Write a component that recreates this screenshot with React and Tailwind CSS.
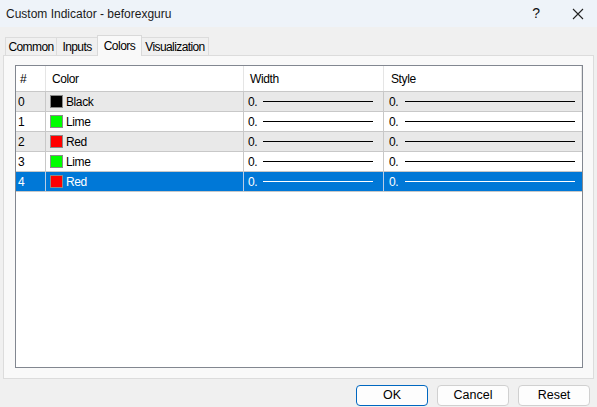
/**
 * Custom Indicator dialog - Colors tab
 */
const rows = [
  { id: 0, color: '#000000', name: 'Black' },
  { id: 1, color: '#00ff00', name: 'Lime' },
  { id: 2, color: '#ff0000', name: 'Red' },
  { id: 3, color: '#00ff00', name: 'Lime' },
  { id: 4, color: '#ff0000', name: 'Red' },
];

const tabs = [
  { label: 'Common', w: 'w-[52px]' },
  { label: 'Inputs', w: 'w-[42px]' },
  { label: 'Colors', w: 'w-[45px]' },
  { label: 'Visualization', w: 'w-[68px]' },
];

const sans = { fontFamily: "'Liberation Sans', Arial, sans-serif" };

function Tab({ label, w, active }) {
  if (active) {
    return (
      <div className={`${w} h-[21px] flex items-center justify-center bg-[#f9f9f9] border border-b-0 border-[#d9d9d9] -mb-px -ml-px relative z-10 text-[12px] tracking-[-0.5px] text-black`}>
        {label}
      </div>
    );
  }
  return (
    <div className={`${w} h-[18px] flex items-center justify-center bg-[#f0f0f0] border border-b-0 border-[#dcdcdc] text-[12px] tracking-[-0.6px] text-black -ml-px first:ml-0`}>
      {label}
    </div>
  );
}

function Row({ row, selected }) {
  const bg = selected ? 'bg-[#0078d7] text-white' : row.id % 2 === 0 ? 'bg-[#e9e9e9] text-black' : 'bg-white text-black';
  const line = selected ? 'bg-white' : 'bg-black';
  const sep = selected ? 'border-[#b9cde6]' : 'border-[#c8c8c8]';
  return (
    <div className={`flex h-[20px] border-b border-[#c8c8c8] text-[12px] tracking-[-0.4px] ${bg}`}>
      <div className={`w-[30px] border-r ${sep} pl-[2px] flex items-center`}>{row.id}</div>
      <div className={`w-[198px] border-r ${sep} pl-[4px] flex items-center`}>
        <span className="w-[13px] h-[13px] border border-[#8a8a8a] mr-[3px]" style={{ backgroundColor: row.color }} />
        {row.name}
      </div>
      <div className={`w-[140px] border-r ${sep} pl-[4px] pr-[10px] flex items-center`}>
        <span>0.</span>
        <span className={`flex-1 h-px ml-[6px] ${line}`} />
      </div>
      <div className="w-[198px] pl-[5px] pr-[7px] flex items-center">
        <span>0.</span>
        <span className={`flex-1 h-px ml-[7px] ${line}`} />
      </div>
    </div>
  );
}

export default function App() {
  return (
    <div className="w-[597px] h-[407px] bg-[#f0f0f0] flex flex-col overflow-hidden select-none" style={sans}>
      {/* title bar */}
      <div className="h-[27px] bg-[#eef3f9] flex items-center justify-between pl-[6px] pr-[13px]">
        <span className="text-[12px] text-[#1a1a1a]">Custom Indicator - beforexguru</span>
        <div className="flex items-center gap-[32px] text-[#111]">
          <span className="text-[14px]">?</span>
          <svg width="12" height="12" viewBox="0 0 12 12" className="stroke-[#222]">
            <path d="M1 1 L11 11 M11 1 L1 11" strokeWidth="1.1" fill="none" />
          </svg>
        </div>
      </div>

      {/* tabs */}
      <div className="flex items-end pl-[5px] mt-[8px]">
        {tabs.map((t) => (
          <Tab key={t.label} label={t.label} w={t.w} active={t.label === 'Colors'} />
        ))}
      </div>

      {/* tab panel */}
      <div className="mx-[3px] h-[324px] bg-[#f9f9f9] border border-[#dcdcdc] pl-[11px] pr-[10px] pt-[9px] pb-[10px] flex">
        <div className="flex-1 bg-white border border-[#828790] flex flex-col">
          <div className="flex h-[26px] border-b border-[#c8c8c8] text-[12px] tracking-[-0.4px] text-black">
            <div className="w-[30px] border-r border-[#e5e5e5] pl-[4px] flex items-center">#</div>
            <div className="w-[198px] border-r border-[#e5e5e5] pl-[6px] flex items-center">Color</div>
            <div className="w-[140px] border-r border-[#e5e5e5] pl-[6px] flex items-center">Width</div>
            <div className="w-[198px] border-r border-[#e5e5e5] pl-[7px] flex items-center">Style</div>
          </div>
          {rows.map((r) => (
            <Row key={r.id} row={r} selected={r.id === 4} />
          ))}
        </div>
      </div>

      {/* buttons */}
      <div className="flex justify-end gap-[9px] pr-[7px] mt-[6px]">
        <button className="w-[72px] h-[21px] rounded-[4px] border border-[#0067c0] bg-[#fdfdfd] text-[12.5px] text-black">
          OK
        </button>
        <button className="w-[72px] h-[21px] rounded-[4px] border border-[#d0d0d0] bg-[#fdfdfd] text-[12.5px] text-black">
          Cancel
        </button>
        <button className="w-[72px] h-[21px] rounded-[4px] border border-[#d0d0d0] bg-[#fdfdfd] text-[12.5px] text-black">
          Reset
        </button>
      </div>
    </div>
  );
}
